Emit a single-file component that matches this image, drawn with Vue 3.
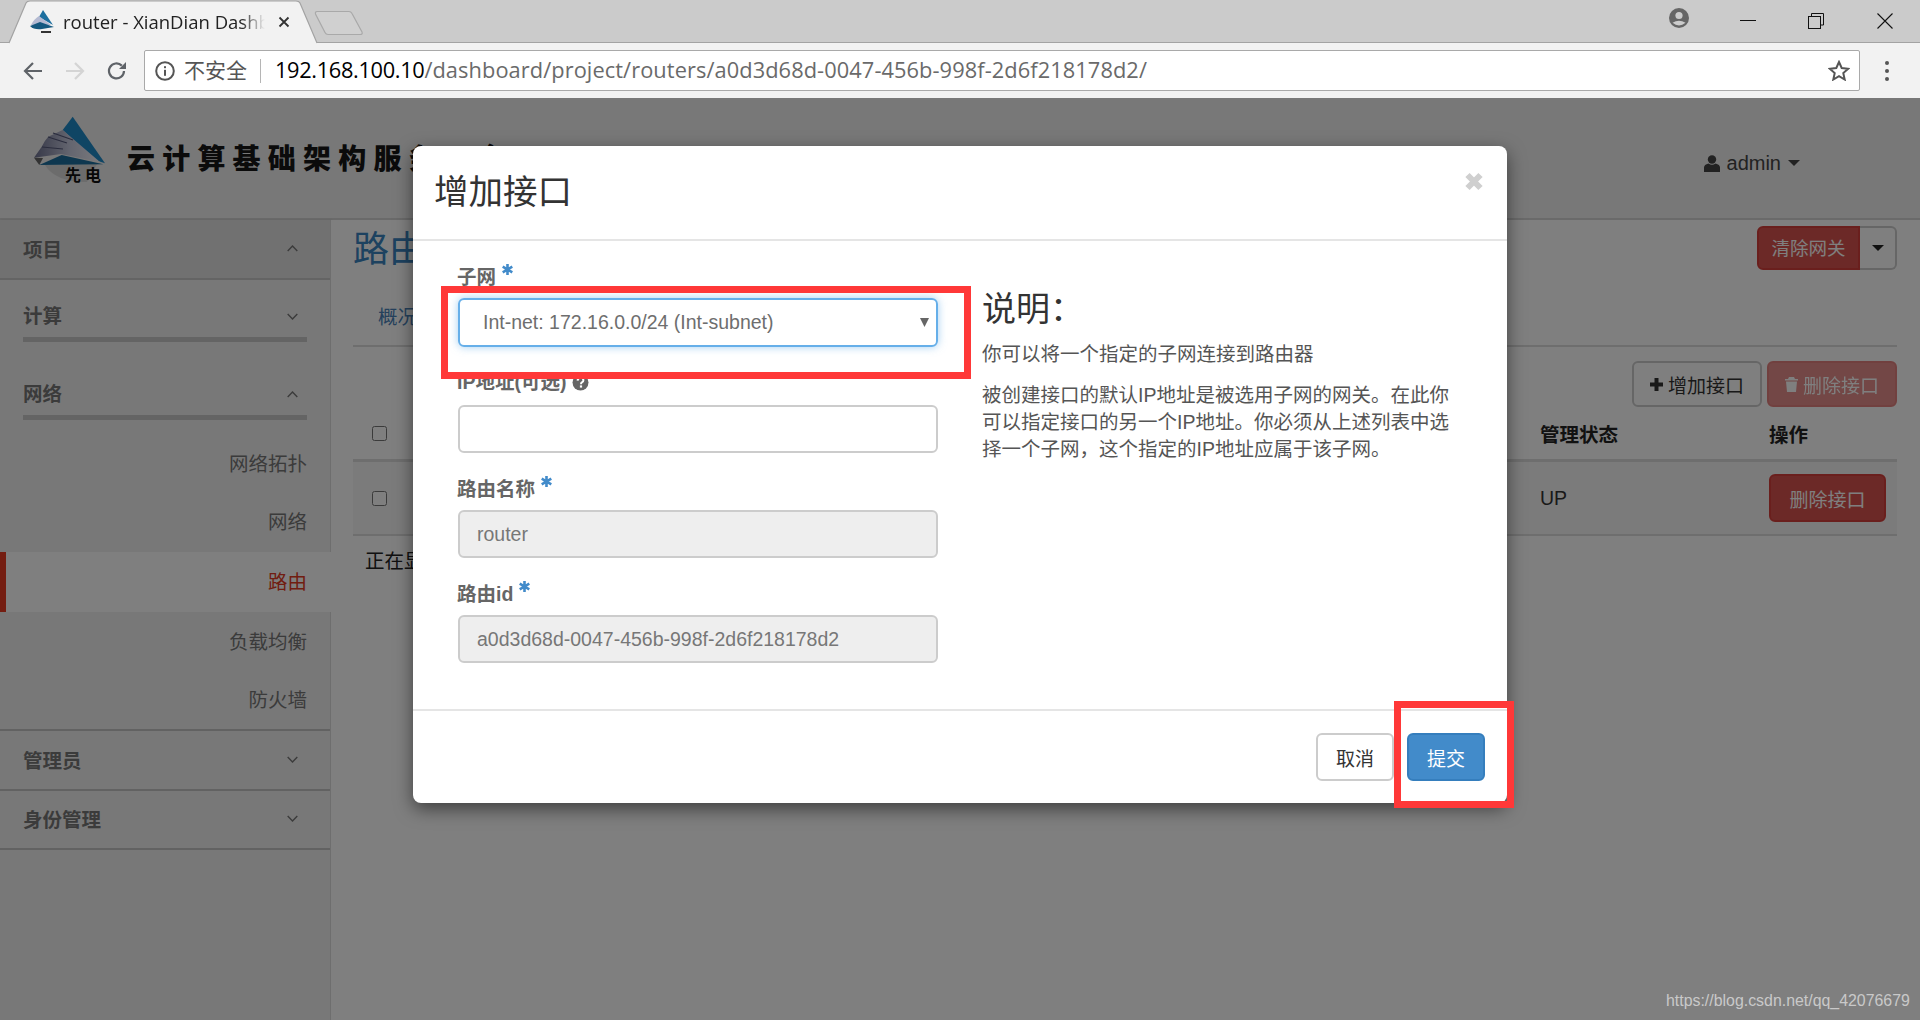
<template>
  <div class="screen">
    <!-- 浏览器外框 -->
    <div class="tabstrip">
      <div class="tab">
        <svg class="tab-shape" width="312" height="44" viewBox="0 0 312 44">
          <path d="M1 43 L18 3 Q19 1 22 1 L288 1 Q291 1 292 3 L309 43" fill="#f2f2f2" stroke="#a3a3a3" stroke-width="1.2" />
        </svg>
        <svg class="favicon" width="24" height="24" viewBox="0 0 24 24">
          <path d="M13 0 L23 15 L9 7 Z" fill="#1c6f9f" />
          <path d="M1 15 Q4 9 9 6 L21 15 Z" fill="#b4bad2" />
          <path d="M0 16 L10 12 L24 17 L12 19 Q4 20 0 16 Z" fill="#14587f" />
          <path d="M11 21 h10 v2 h-10 z" fill="#333" />
        </svg>
        <span class="tab-title">router - XianDian Dashboard</span>
        <svg class="tab-close" width="12" height="12" viewBox="0 0 12 12">
          <path d="M1.5 1.5 L10.5 10.5 M10.5 1.5 L1.5 10.5" stroke="#333" stroke-width="1.8" />
        </svg>
      </div>
      <svg class="newtab" width="52" height="26" viewBox="0 0 52 26">
        <path d="M3 1.5 L35 1.5 Q37 1.5 38 3.5 L48 22 Q49 24.5 46 24.5 L14 24.5 Q12 24.5 11 22.5 L1.5 4 Q1 1.5 3 1.5 Z" fill="#d0d0d0" stroke="#a9a9a9" stroke-width="1.2" />
      </svg>
      <div class="win-controls">
        <svg class="profile" width="20" height="20" viewBox="0 0 20 20">
          <circle cx="10" cy="10" r="10" fill="#666" />
          <circle cx="10" cy="7.5" r="3.6" fill="#ccc" />
          <path d="M3.5 14.8 Q10 10.5 16.5 14.8 Q10 20 3.5 14.8 Z" fill="#ccc" />
        </svg>
        <svg class="win-btn" width="16" height="16" viewBox="0 0 16 16"><path d="M0 7.5 H16" stroke="#111" stroke-width="1" /></svg>
        <svg class="win-btn win-restore" width="16" height="16" viewBox="0 0 16 16">
          <path d="M3.5 3.5 V0.5 H15.5 V12 H12.5" fill="none" stroke="#111" />
          <rect x="0.5" y="3.5" width="12" height="12" fill="none" stroke="#111" />
        </svg>
        <svg class="win-btn" width="16" height="16" viewBox="0 0 16 16"><path d="M0.5 0.5 L15.5 15.5 M15.5 0.5 L0.5 15.5" stroke="#111" stroke-width="1.1" /></svg>
      </div>
    </div>

    <div class="toolbar">
      <svg class="nav-icon" width="20" height="20" viewBox="0 0 20 20">
        <path d="M19 10 H2.5 M10 2 L2 10 L10 18" fill="none" stroke="#5f6368" stroke-width="2.2" />
      </svg>
      <svg class="nav-icon" width="20" height="20" viewBox="0 0 20 20">
        <path d="M1 10 H17.5 M10 2 L18 10 L10 18" fill="none" stroke="#d4d4d4" stroke-width="2.2" />
      </svg>
      <svg class="nav-icon" width="20" height="20" viewBox="0 0 20 20">
        <path d="M17 10 A7.5 7.5 0 1 1 14.8 4.6" fill="none" stroke="#5f6368" stroke-width="2.2" />
        <path d="M12 8 H19 V1 Z" fill="#5f6368" />
      </svg>
      <div class="omnibox">
        <svg class="info" width="20" height="20" viewBox="0 0 20 20">
          <circle cx="10" cy="10" r="8.8" fill="none" stroke="#555" stroke-width="2" />
          <rect x="9" y="8.8" width="2" height="6" fill="#555" />
          <rect x="9" y="5.2" width="2" height="2" fill="#555" />
        </svg>
        <span class="insecure">不安全</span>
        <span class="omni-sep"></span>
        <span class="url"><b>192.168.100.10</b>/dashboard/project/routers/{{ routerId }}/</span>
        <svg class="star" width="22" height="21" viewBox="0 0 22 21">
          <path d="M11 2 L13.7 8 L20.2 8.7 L15.3 13.1 L16.7 19.5 L11 16.2 L5.3 19.5 L6.7 13.1 L1.8 8.7 L8.3 8 Z" fill="none" stroke="#555" stroke-width="2" />
        </svg>
      </div>
      <div class="dots"><i></i><i></i><i></i></div>
    </div>

    <!-- 页面 -->
    <div class="page">
      <header class="site-head">
        <div class="brand">
          <svg class="logo" width="74" height="68" viewBox="0 0 74 68">
            <defs>
              <linearGradient id="fan" x1="0" y1="0" x2="1" y2="0">
                <stop offset="0" stop-color="#6d7190" />
                <stop offset="0.55" stop-color="#c9cce0" />
                <stop offset="1" stop-color="#f4f4fa" />
              </linearGradient>
            </defs>
            <path d="M12 49 Q22 66 54 66 L64 48 Z" fill="#d8d8d8" />
            <path d="M39.7 0.7 L72 47.3 L62 44 L29.7 14 Z" fill="#1f8ac8" />
            <path d="M1 41.7 L8.7 30.7 Q12 24 15.3 20.7 L29.7 14 L67 46 L28 38 Z" fill="url(#fan)" />
            <path d="M15 21 L34 27 M9 31 L30 33 M20 17 L40 24" stroke="#55597a" stroke-width="1.2" fill="none" />
            <path d="M6.3 49 L28.7 39 L70.3 48.3 Z" fill="#1c6f9f" />
            <path d="M1 41.7 L10 42 L6.3 49 Z" fill="#666" />
            <text x="32" y="65" class="logo-mark">先电</text>
          </svg>
          <span class="brand-text">云计算基础架构服务平台</span>
        </div>
        <div class="user-menu">
          <svg width="16" height="17" viewBox="0 0 16 17">
            <circle cx="8" cy="4.5" r="4.2" fill="#444" />
            <path d="M0 17 V12.5 Q0 9.5 4.5 8.5 Q8 11 11.5 8.5 Q16 9.5 16 12.5 V17 Z" fill="#444" />
          </svg>
          <span>admin</span>
          <i class="caret"></i>
        </div>
      </header>

      <div class="page-body">
        <aside class="sidebar">
          <div class="nav-top">项目<Chevron up /></div>
          <div class="nav-group">计算<Chevron /></div>
          <div class="nav-group second">网络<Chevron up /></div>
          <ul class="nav-items">
            <li v-for="item in navItems" :key="item" :class="{ active: item === '路由' }">{{ item }}</li>
          </ul>
          <div class="nav-row">管理员<Chevron /></div>
          <div class="nav-row">身份管理<Chevron /></div>
        </aside>

        <main class="content">
          <div class="title-row">
            <h1>路由详情</h1>
            <div class="btn-group">
              <button class="btn danger gate">清除网关</button>
              <button class="btn outline split"><i class="caret dark"></i></button>
            </div>
          </div>
          <div class="tabs"><a>概况</a></div>
          <div class="actions">
            <button class="btn outline action">
              <svg width="13" height="13" viewBox="0 0 13 13"><path d="M4.5 0 H8.5 V4.5 H13 V8.5 H8.5 V13 H4.5 V8.5 H0 V4.5 H4.5 Z" fill="#333" /></svg>
              增加接口
            </button>
            <button class="btn danger action faded">
              <svg width="13" height="15" viewBox="0 0 13 15"><path d="M4 0 H9 L10 2 H13 V3.5 H0 V2 H3 Z M1 4.5 H12 L11 15 H2 Z" fill="#fff" /></svg>
              删除接口
            </button>
          </div>
          <div class="table-row head">
            <span class="cell-check"><input type="checkbox" /></span>
            <span>管理状态</span>
            <span>操作</span>
          </div>
          <div class="table-row body">
            <span class="cell-check"><input type="checkbox" /></span>
            <span>UP</span>
            <span><button class="btn danger row-btn">删除接口</button></span>
          </div>
          <p class="count">正在显示 1 项</p>
        </main>
      </div>

      <!-- 遮罩与弹窗 -->
      <div class="backdrop"></div>
      <section class="modal">
        <div class="modal-head">
          <h3>增加接口</h3>
          <svg class="modal-close" width="20" height="19" viewBox="0 0 20 19">
            <path d="M3.5 3 L16.5 16 M16.5 3 L3.5 16" stroke="#cfcfcf" stroke-width="6" />
          </svg>
        </div>
        <div class="modal-body">
          <form class="form-col" @submit.prevent>
            <label>子网<Star /></label>
            <div class="select-box">
              <span>Int-net: 172.16.0.0/24 (Int-subnet)</span>
              <svg width="9" height="9" viewBox="0 0 10 10"><path d="M0 0 H10 L5 10 Z" fill="#666" /></svg>
            </div>
            <label class="ip-label">IP地址(可选)
              <svg class="help" width="17" height="17" viewBox="0 0 17 17">
                <circle cx="8.5" cy="8.5" r="8" fill="#666" />
                <path d="M5.6 6.6 Q5.8 3.8 8.6 3.8 Q11.4 3.8 11.4 6.2 Q11.4 7.6 9.9 8.4 Q9 8.9 9 10.2" fill="none" stroke="#fff" stroke-width="2" />
                <rect x="7.9" y="11.4" width="2.2" height="2.2" fill="#fff" />
              </svg>
            </label>
            <input class="field" type="text" />
            <label>路由名称<Star /></label>
            <input class="field" type="text" value="router" disabled />
            <label>路由id<Star /></label>
            <input class="field" type="text" :value="routerId" disabled />
          </form>
          <div class="help-col">
            <h3>说明：</h3>
            <p class="lead">你可以将一个指定的子网连接到路由器</p>
            <p>被创建接口的默认IP地址是被选用子网的网关。在此你可以指定接口的另一个IP地址。你必须从上述列表中选择一个子网，这个指定的IP地址应属于该子网。</p>
          </div>
        </div>
        <div class="modal-foot">
          <button class="btn plain">取消</button>
          <button class="btn primary">提交</button>
        </div>
      </section>

      <!-- 截图上的红框标注 -->
      <div class="mark mark-select"></div>
      <div class="mark mark-submit"></div>
      <span class="watermark">https://blog.csdn.net/qq_42076679</span>
    </div>
  </div>
</template>

<script setup>
import { h } from 'vue';

const routerId = 'a0d3d68d-0047-456b-998f-2d6f218178d2';
const navItems = ['网络拓扑', '网络', '路由', '负载均衡', '防火墙'];

// 侧栏的小箭头
const Chevron = (props) =>
  h('svg', { class: 'chevron', width: 11, height: 7, viewBox: '0 0 11 7' }, [
    h('path', {
      d: props.up !== undefined && props.up !== false ? 'M0.7 6 L5.5 1 L10.3 6' : 'M0.7 1 L5.5 6 L10.3 1',
      fill: 'none',
      stroke: '#777',
      'stroke-width': 1.4,
    }),
  ]);
Chevron.props = ['up'];

// 必填的蓝色星号
const Star = () =>
  h('svg', { class: 'star-req', width: 11, height: 11, viewBox: '0 0 11 11' }, [
    h('path', {
      d: 'M5.5 0 V11 M0.7 2.7 L10.3 8.3 M10.3 2.7 L0.7 8.3',
      stroke: '#428bca',
      'stroke-width': 2.6,
    }),
  ]);
</script>

<style>
html,
body {
  margin: 0;
  overflow: hidden;
}
</style>

<style scoped>
.screen {
  width: 1920px;
  height: 1020px;
  overflow: hidden;
  display: flex;
  flex-direction: column;
  font-family: "Liberation Sans", "Noto Sans CJK SC", sans-serif;
  background: #fff;
  color: #333;
}
button {
  font-family: inherit;
}

/* 浏览器外框 */
.tabstrip {
  height: 43px;
  box-sizing: border-box;
  background: #cbcbcb;
  border-bottom: 1px solid #a3a3a3;
  display: flex;
  align-items: flex-start;
  flex-shrink: 0;
}
.tab {
  position: relative;
  width: 306px;
  height: 43px;
  margin-left: 8px;
  padding-left: 22px;
  box-sizing: border-box;
  display: flex;
  align-items: center;
  flex-shrink: 0;
}
.tab-shape {
  position: absolute;
  left: 0;
  top: 0;
}
.favicon,
.tab-title,
.tab-close {
  position: relative;
}
.tab-title {
  width: 202px;
  margin-left: 9px;
  overflow: hidden;
  white-space: nowrap;
  font: 18.5px "Open Sans", "Noto Sans", sans-serif;
  color: #222;
  -webkit-mask-image: linear-gradient(to right, #000 88%, transparent 100%);
  mask-image: linear-gradient(to right, #000 88%, transparent 100%);
}
.tab-close {
  margin-left: 13px;
}
.newtab {
  margin: 10px 0 0 0;
  flex-shrink: 0;
}
.win-controls {
  margin-left: auto;
  display: flex;
  align-items: flex-start;
  padding: 8px 27px 0 0;
}
.profile {
  margin-right: 51px;
}
.win-btn {
  margin-top: 5px;
  margin-left: 53px;
}
.profile + .win-btn {
  margin-left: 0;
}
.win-restore {
  margin-left: 52px;
}

.toolbar {
  height: 55px;
  background: #f2f2f2;
  display: flex;
  align-items: center;
  padding-left: 23px;
  flex-shrink: 0;
}
.nav-icon {
  margin-right: 22px;
}
.omnibox {
  width: 1716px;
  height: 41px;
  margin-left: -5px;
  box-sizing: border-box;
  background: #fff;
  border: 1px solid #a9a9a9;
  border-radius: 2px;
  display: flex;
  align-items: center;
  padding-left: 10px;
}
.insecure {
  margin: -3px 0 0 9px;
  font-size: 21px;
  color: #555;
}
.omni-sep {
  width: 1px;
  height: 24px;
  background: #b5b5b5;
  margin: 0 14px 0 13px;
}
.url {
  margin-top: -2px;
  font: 21.8px "Open Sans", "Noto Sans", sans-serif;
  letter-spacing: 0.08px;
  color: #6a6a6a;
  white-space: nowrap;
}
.url b {
  font-weight: 400;
  letter-spacing: -0.35px;
  color: #000;
}
.star {
  margin-left: auto;
  margin-right: 9px;
}
.dots {
  margin-left: 25px;
  display: flex;
  flex-direction: column;
  gap: 4px;
}
.dots i {
  width: 4px;
  height: 4px;
  border-radius: 50%;
  background: #555;
}

/* 页面 */
.page {
  position: relative;
  flex: 1;
  overflow: hidden;
  display: flex;
  flex-direction: column;
  font-size: 19.5px;
}
.site-head {
  height: 122px;
  box-sizing: border-box;
  background: #f0f0f0;
  border-bottom: 2px solid #d4d4d4;
  display: flex;
  justify-content: space-between;
  flex-shrink: 0;
}
.brand {
  display: flex;
  align-items: flex-start;
  padding: 18px 0 0 33px;
}
.logo {
  flex-shrink: 0;
  overflow: visible;
}
.logo-mark {
  font: 700 16px "Noto Sans CJK SC", sans-serif;
  fill: #111;
  letter-spacing: 4px;
}
.brand-text {
  margin: 23px 0 0 20px;
  font: 900 28px/36px "Noto Sans CJK SC", sans-serif;
  letter-spacing: 7.2px;
  color: #161616;
  white-space: nowrap;
}
.user-menu {
  display: flex;
  align-items: center;
  gap: 7px;
  height: 34px;
  margin: 48px 120px 0 0;
  color: #444;
  font-size: 20px;
}
.caret {
  width: 0;
  height: 0;
  border-left: 6px solid transparent;
  border-right: 6px solid transparent;
  border-top: 6px solid #444;
}
.caret.dark {
  display: inline-block;
  border-top-color: #222;
}

.page-body {
  flex: 1;
  display: flex;
  min-height: 0;
}
.sidebar {
  width: 331px;
  box-sizing: border-box;
  flex-shrink: 0;
  background: #f0f0f0;
  border-right: 1px solid #dcdcdc;
  box-shadow: 1px 0 2px rgba(0, 0, 0, 0.08);
  font-weight: 700;
  color: #777;
}
.chevron {
  margin-left: auto;
}
.nav-top {
  height: 60px;
  box-sizing: border-box;
  display: flex;
  align-items: center;
  padding: 0 32px 2px 23px;
  background: #e2e2e2;
  border-bottom: 2px solid #c8c8c8;
}
.nav-group {
  height: 62px;
  box-sizing: border-box;
  margin: 0 23px;
  padding: 18px 9px 3px 0;
  line-height: 36px;
  display: flex;
  align-items: center;
  border-bottom: 5px solid #c9c9c9;
}
.nav-group.second {
  margin-top: 14px;
  height: 64px;
  padding-top: 20px;
}
.nav-items {
  list-style: none;
  margin: 15px 0 0;
  padding: 0;
  font-weight: 400;
  text-align: right;
}
.nav-items li {
  height: 58px;
  line-height: 58px;
  padding-right: 23px;
}
.nav-items li.active {
  height: 60px;
  line-height: 60px;
  margin: 1px -1px 1px 0;
  padding-right: 24px;
  background: #fff;
  color: #e23a22;
  border-left: 6px solid #e83a22;
}
.nav-row {
  height: 60px;
  box-sizing: border-box;
  display: flex;
  align-items: center;
  padding: 0 32px 2px 23px;
  border-top: 2px solid #c4c4c4;
}
.nav-row:last-child {
  height: 61px;
  border-bottom: 2px solid #c4c4c4;
}

.content {
  flex: 1;
  min-width: 0;
  padding: 0 23px 0 22px;
  background: #fff;
}
.title-row {
  height: 56px;
  display: flex;
  justify-content: space-between;
  align-items: flex-start;
}
h1 {
  margin: 3px 0 0;
  font-size: 36px;
  font-weight: 400;
  line-height: 53px;
  color: #3a84c0;
}
.btn {
  box-sizing: border-box;
  border: 2px solid transparent;
  border-radius: 6px;
  font-size: 19px;
  padding: 0;
  display: inline-flex;
  align-items: center;
  justify-content: center;
  gap: 5px;
}
.btn-group {
  display: flex;
  margin-top: 6px;
}
.danger {
  background: #d9534f;
  border-color: #d43f3a;
  color: #fff;
}
.outline {
  background: #fff;
  border-color: #ccc;
  color: #333;
}
.gate {
  width: 103px;
  height: 44px;
  padding-bottom: 2px;
  font-size: 18.5px;
  border-radius: 6px 0 0 6px;
}
.split {
  width: 37px;
  height: 44px;
  border-left: 0;
  border-radius: 0 6px 6px 0;
}
.tabs {
  height: 71px;
  box-sizing: border-box;
  padding: 23px 0 0 25px;
  line-height: 36px;
  border-bottom: 2px solid #ddd;
  color: #4a82b8;
}
.actions {
  display: flex;
  justify-content: flex-end;
  gap: 5px;
  margin-top: 14px;
}
.action {
  width: 130px;
  height: 46px;
}
.faded {
  opacity: 0.65;
}
.table-row {
  display: grid;
  grid-template-columns: 1187px 229px 1fr;
  align-items: center;
}
.table-row.head {
  height: 55px;
  border-bottom: 3px solid #ddd;
  box-sizing: border-box;
  font-weight: 700;
  font-size: 19.5px;
  color: #222;
}
.table-row.body {
  height: 74px;
  box-sizing: border-box;
  border-bottom: 2px solid #ddd;
  background: #f7f7f7;
  color: #333;
}
.cell-check {
  padding-left: 19px;
  display: flex;
}
.cell-check input {
  width: 15px;
  height: 15px;
  margin: 0;
}
.row-btn {
  width: 117px;
  height: 48px;
}
.count {
  margin: 12px 0 0 12px;
  line-height: 27px;
  color: #222;
}

.backdrop {
  position: absolute;
  inset: 0;
  background: rgba(0, 0, 0, 0.5);
}
.modal {
  position: absolute;
  left: 413px;
  top: 48px;
  width: 1094px;
  height: 657px;
  box-sizing: border-box;
  background: #fff;
  border-radius: 8px;
  box-shadow: 0 6px 18px rgba(0, 0, 0, 0.5);
  display: flex;
  flex-direction: column;
}
.modal-head {
  height: 95px;
  box-sizing: border-box;
  flex-shrink: 0;
  border-bottom: 2px solid #e5e5e5;
  padding: 0 23px 0 21px;
  display: flex;
  justify-content: space-between;
  align-items: flex-start;
}
.modal-head h3 {
  margin: 21px 0 0;
  font-size: 34.5px;
  line-height: 50px;
  font-weight: 400;
  color: #333;
}
.modal-close {
  margin-top: 26px;
}
.modal-body {
  flex: 1;
  display: flex;
  padding: 15px 0 0 45px;
  min-height: 0;
}
.form-col {
  width: 480px;
  flex-shrink: 0;
  display: flex;
  flex-direction: column;
}
.form-col label {
  height: 42px;
  line-height: 42px;
  margin-left: -1px;
  font-weight: 700;
  color: #666;
  display: flex;
  align-items: center;
}
.form-col label.ip-label {
  height: 44px;
  padding-bottom: 2px;
  box-sizing: border-box;
}
.star-req {
  margin: -16px 0 0 6px;
}
.help {
  margin-left: 6px;
}
.select-box {
  height: 49px;
  box-sizing: border-box;
  border: 2px solid #66afe9;
  border-radius: 6px;
  box-shadow: 0 0 8px rgba(102, 175, 233, 0.6);
  padding: 0 7px 0 23px;
  display: flex;
  align-items: center;
  justify-content: space-between;
  color: #6e6e6e;
  margin-bottom: 14px;
}
.field {
  height: 48px;
  box-sizing: border-box;
  border: 2px solid #ccc;
  border-radius: 6px;
  padding: 0 17px;
  font-family: inherit;
  font-size: 19.5px;
  color: #777;
  background: #fff;
  margin-bottom: 15px;
}
.field:disabled {
  background: #eee;
  opacity: 1;
}
.help-col {
  width: 470px;
  margin-left: 44px;
  color: #555;
  line-height: 27px;
}
.help-col h3 {
  margin: 32px 0 11px;
  font-size: 34px;
  line-height: 42px;
  font-weight: 400;
  color: #333;
}
.help-col p {
  margin: 0 0 14px;
}
.modal-foot {
  height: 94px;
  box-sizing: border-box;
  flex-shrink: 0;
  border-top: 2px solid #e5e5e5;
  padding: 22px 22px 0 0;
  display: flex;
  justify-content: flex-end;
  align-items: flex-start;
  gap: 13px;
}
.plain {
  width: 78px;
  height: 48px;
  background: #fff;
  border-color: #ccc;
  color: #333;
}
.primary {
  width: 78px;
  height: 48px;
  background: #428bca;
  border-color: #357ebd;
  color: #fff;
}

.mark {
  position: absolute;
  box-sizing: border-box;
  border: 7px solid #ff3838;
}
.mark-select {
  left: 441px;
  top: 188px;
  width: 530px;
  height: 93px;
}
.mark-submit {
  left: 1394px;
  top: 603px;
  width: 120px;
  height: 107px;
}
.watermark {
  position: absolute;
  left: 1666px;
  top: 893px;
  font-size: 15.9px;
  line-height: 20px;
  color: #c9c9c9;
}
</style>
